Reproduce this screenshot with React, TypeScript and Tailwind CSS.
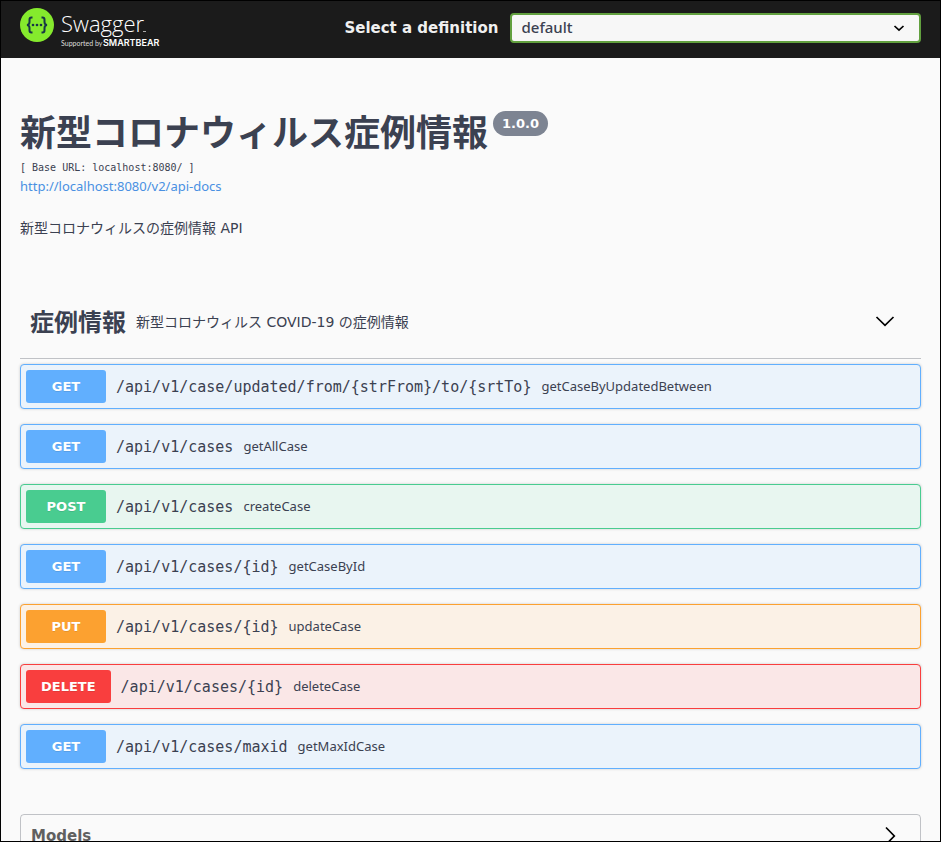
import React from "react";

type Method = "GET" | "POST" | "PUT" | "DELETE";

interface Operation {
  method: Method;
  path: string;
  summary: string;
}

const operations: Operation[] = [
  { method: "GET", path: "/api/v1/case/updated/from/{strFrom}/to/{srtTo}", summary: "getCaseByUpdatedBetween" },
  { method: "GET", path: "/api/v1/cases", summary: "getAllCase" },
  { method: "POST", path: "/api/v1/cases", summary: "createCase" },
  { method: "GET", path: "/api/v1/cases/{id}", summary: "getCaseById" },
  { method: "PUT", path: "/api/v1/cases/{id}", summary: "updateCase" },
  { method: "DELETE", path: "/api/v1/cases/{id}", summary: "deleteCase" },
  { method: "GET", path: "/api/v1/cases/maxid", summary: "getMaxIdCase" },
];

const blockStyle: Record<Method, string> = {
  GET: "border-[#61affe] bg-[#ebf3fb]",
  POST: "border-[#49cc90] bg-[#e8f6f0]",
  PUT: "border-[#fca130] bg-[#fbf1e6]",
  DELETE: "border-[#f93e3e] bg-[#fae7e7]",
};

const badgeStyle: Record<Method, string> = {
  GET: "bg-[#61affe]",
  POST: "bg-[#49cc90]",
  PUT: "bg-[#fca130]",
  DELETE: "bg-[#f93e3e]",
};

function Logo() {
  return (
    <svg width="142" height="42" viewBox="0 0 142 42" role="img" aria-label="Swagger, supported by SmartBear">
      <circle cx="17" cy="18" r="17" fill="#85ea2d" />
      <g fill="none" stroke="#173647" strokeWidth="2">
        <path d="M12.5 10.5h-1c-1.500 0-2 .8-2 2.200v2.300c0 1.800-.7 2.800-2.500 3 1.800.2 2.500 1.200 2.500 3v2.300c0 1.400.5 2.200 2 2.200h1" />
        <path d="M21.500 10.500h1c1.500 0 2 .8 2 2.200v2.300c0 1.800.7 2.800 2.500 3-1.800.2-2.500 1.200-2.500 3v2.300c0 1.400-.5 2.200-2 2.200h-1" />
      </g>
      <g fill="#173647">
        <circle cx="13" cy="18" r="1.300" />
        <circle cx="17" cy="18" r="1.300" />
        <circle cx="21" cy="18" r="1.300" />
      </g>
      <text x="41" y="25" fill="#fff" className="font-['Open_Sans',sans-serif] text-[22px] font-light">Swagger</text>
      <path d="M123 24.500h3" stroke="#aaa" />
      <text x="41" y="39" fill="#ddd" className="font-['Lato',sans-serif] text-[7px]">Supported by</text>
      <text x="83" y="39" fill="#fff" className="font-['Inter',sans-serif] text-[9px] font-semibold">SMARTBEAR</text>
    </svg>
  );
}

function Chevron({ className }: { className?: string }) {
  return (
    <svg className={className} width="20" height="20" viewBox="0 0 20 20" fill="none" stroke="#000" strokeWidth="1.700" aria-hidden="true">
      <path d="M1.500 6l8.500 8.300L18.500 6" />
    </svg>
  );
}

function OperationRow({ method, path, summary }: Operation) {
  return (
    <li className={`rounded border shadow-[0_0_3px_rgba(0,0,0,0.19)] ${blockStyle[method]}`}>
      <button type="button" className="flex w-full items-center gap-[10px] p-[5px] text-left">
        <span
          className={`min-w-[80px] rounded-[3px] px-[15px] text-center font-['DejaVu_Sans',sans-serif] text-[13px] leading-[33px] font-bold text-white [text-shadow:0_1px_0_rgba(0,0,0,0.1)] ${badgeStyle[method]}`}
        >
          {method}
        </span>
        <span className="font-['DejaVu_Sans_Mono',monospace] text-[15px] leading-5">{path}</span>
        <span className="pb-[2px] text-[13px] leading-5">{summary}</span>
      </button>
    </li>
  );
}

export default function App() {
  return (
    <div className="h-screen overflow-hidden border border-black bg-[#fafafa] font-['Noto_Sans','Noto_Sans_CJK_JP',sans-serif] text-[#3b4151]">
      <header className="flex h-[57px] items-center bg-[#1b1b1b] px-[19px] pb-[3px]">
        <a href="#" className="mr-auto">
          <Logo />
        </a>
        <label htmlFor="definition" className="mr-[11px] font-['DejaVu_Sans',sans-serif] text-[15px] font-bold text-[#f0f0f0]">
          Select a definition
        </label>
        <div className="grid w-[calc(50%-39px)] items-center">
          <select
            id="definition"
            className="col-start-1 row-start-1 h-[30px] appearance-none rounded border-2 border-[#62a03f] bg-[#f7f7f7] pr-10 pb-[2px] pl-[10px] text-[15px] leading-5 font-medium"
          >
            <option>default</option>
          </select>
          <svg className="pointer-events-none col-start-1 row-start-1 mr-4 justify-self-end" width="12" height="12" viewBox="0 0 12 12" fill="none" stroke="#000" strokeWidth="1.700" aria-hidden="true">
            <path d="M1.500 4L6 8.200 10.500 4" />
          </svg>
        </div>
      </header>

      <main className="px-[19px]">
        <section className="pt-[53px]">
          <div className="flex items-start gap-[5px]">
            <h1 className="text-[36px] leading-[44px] font-bold">新型コロナウィルス症例情報</h1>
            <span className="rounded-full bg-[#7d8492] px-[9px] font-['DejaVu_Sans',sans-serif] text-[13px] leading-[25px] font-bold text-white">
              1.0.0
            </span>
          </div>
          <p className="mt-1 font-['DejaVu_Sans_Mono',monospace] text-[10px] leading-[18px]">[ Base URL: localhost:8080/ ]</p>
          <a href="#" className="block text-[13px] leading-[18px] text-[#4990e2]">
            http://localhost:8080/v2/api-docs
          </a>
          <p className="mt-[23px] font-['DejaVu_Sans','Noto_Sans_CJK_JP',sans-serif] text-[14px] leading-5">
            新型コロナウィルスの症例情報 API
          </p>
        </section>

        <section className="mt-12">
          <button type="button" className="flex h-[73px] w-full items-center border-b border-[#3b4151]/30 pr-[26px] pl-[10px] text-left">
            <h2 className="text-[24px] leading-8 font-bold">症例情報</h2>
            <span className="ml-[10px] font-['DejaVu_Sans','Noto_Sans_CJK_JP',sans-serif] text-[14px] leading-5">
              新型コロナウィルス COVID-19 の症例情報
            </span>
            <Chevron className="mb-[3px] ml-auto" />
          </button>
          <ul className="mt-[5px] flex flex-col gap-[15px]">
            {operations.map((op) => (
              <OperationRow key={op.summary} {...op} />
            ))}
          </ul>
        </section>

        <section className="mt-[45px] rounded border border-[#3b4151]/30">
          <button type="button" className="flex h-[42px] w-full items-center justify-between pr-5 pl-[10px]">
            <h2 className="font-['DejaVu_Sans',sans-serif] text-[15px] leading-5 font-bold text-[#606060]">Models</h2>
            <Chevron className="-rotate-90" />
          </button>
        </section>
      </main>
    </div>
  );
}
